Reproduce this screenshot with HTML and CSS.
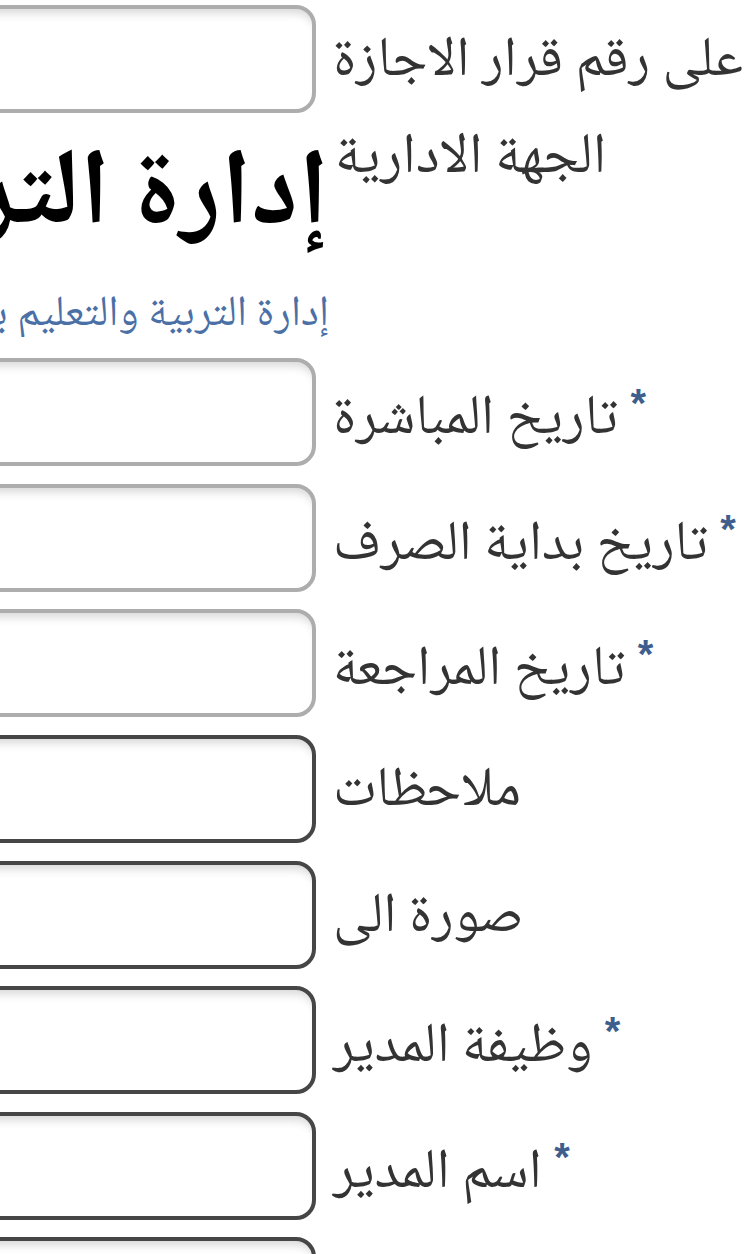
FILE: index.html
```html
<!DOCTYPE html>
<html lang="ar">
<head>
<meta charset="utf-8">
<link rel="stylesheet" href="styles.css">
</head>
<body>
<div class="form">
  <div class="row">
    <div class="field light"></div>
    <div class="label">على رقم قرار الاجازة</div>
  </div>
  <div class="row head-row">
    <div class="value">
      <div class="big" dir="rtl">إدارة التربية والتعليم</div>
      <div class="link" dir="rtl">إدارة التربية والتعليم بمحافظة</div>
    </div>
    <div class="label">الجهة الادارية</div>
  </div>
  <div class="row">
    <div class="field light"></div>
    <div class="label"><span class="req">*</span> تاريخ المباشرة</div>
  </div>
  <div class="row">
    <div class="field light"></div>
    <div class="label"><span class="req">*</span> تاريخ بداية الصرف</div>
  </div>
  <div class="row">
    <div class="field light"></div>
    <div class="label"><span class="req">*</span> تاريخ المراجعة</div>
  </div>
  <div class="row">
    <div class="field dark"></div>
    <div class="label">ملاحظات</div>
  </div>
  <div class="row">
    <div class="field dark"></div>
    <div class="label">صورة الى</div>
  </div>
  <div class="row">
    <div class="field dark"></div>
    <div class="label"><span class="req">*</span> وظيفة المدير</div>
  </div>
  <div class="row">
    <div class="field dark"></div>
    <div class="label"><span class="req">*</span> اسم المدير</div>
  </div>
  <div class="row">
    <div class="field dark"></div>
  </div>
</div>
</body>
</html>
```
FILE: styles.css
```css
html, body {
  margin: 0;
  padding: 0;
  background: #ffffff;
  overflow: hidden;
}
body {
  width: 750px;
  height: 1254px;
  font-family: "Noto Naskh Arabic", "Noto Sans Arabic", "DejaVu Sans", sans-serif;
  color: #333333;
}
.form {
  display: flex;
  flex-direction: column;
  gap: 17.6px;
  padding-top: 5px;
  margin-left: -120px;
}
.row {
  display: flex;
  align-items: center;
  gap: 17px;
  direction: ltr;
}
.field {
  flex: 0 0 auto;
  width: 436px;
  height: 108px;
  box-sizing: border-box;
  border: 4px solid #adadad;
  border-radius: 20px;
  background: #ffffff;
  box-shadow: inset 0 10px 10px -6px rgba(0, 0, 0, 0.16);
}
.field.dark {
  border-color: #464646;
}
.label {
  font-size: 56px;
  line-height: 1;
  white-space: nowrap;
  direction: rtl;
  padding-top: 8px;
}
.req {
  font-family: "Liberation Sans", sans-serif;
  font-weight: bold;
  color: #3e5f8e;
  font-size: 40px;
  vertical-align: 16px;
}
.head-row {
  align-items: flex-start;
  height: 210px;
  gap: 6px;
}
.head-row .label {
  padding-top: 0;
  font-size: 57px;
}
.value {
  flex: 0 0 auto;
  width: 449px;
  overflow: hidden;
  display: flex;
  flex-direction: column;
  align-items: flex-end;
}
.big {
  font-size: 108px;
  font-weight: bold;
  color: #000000;
  white-space: nowrap;
  line-height: 1;
  margin-top: 15px;
}
.link {
  font-size: 43px;
  line-height: 1;
  color: #4a70a6;
  white-space: nowrap;
  margin-top: 40px;
}
```
